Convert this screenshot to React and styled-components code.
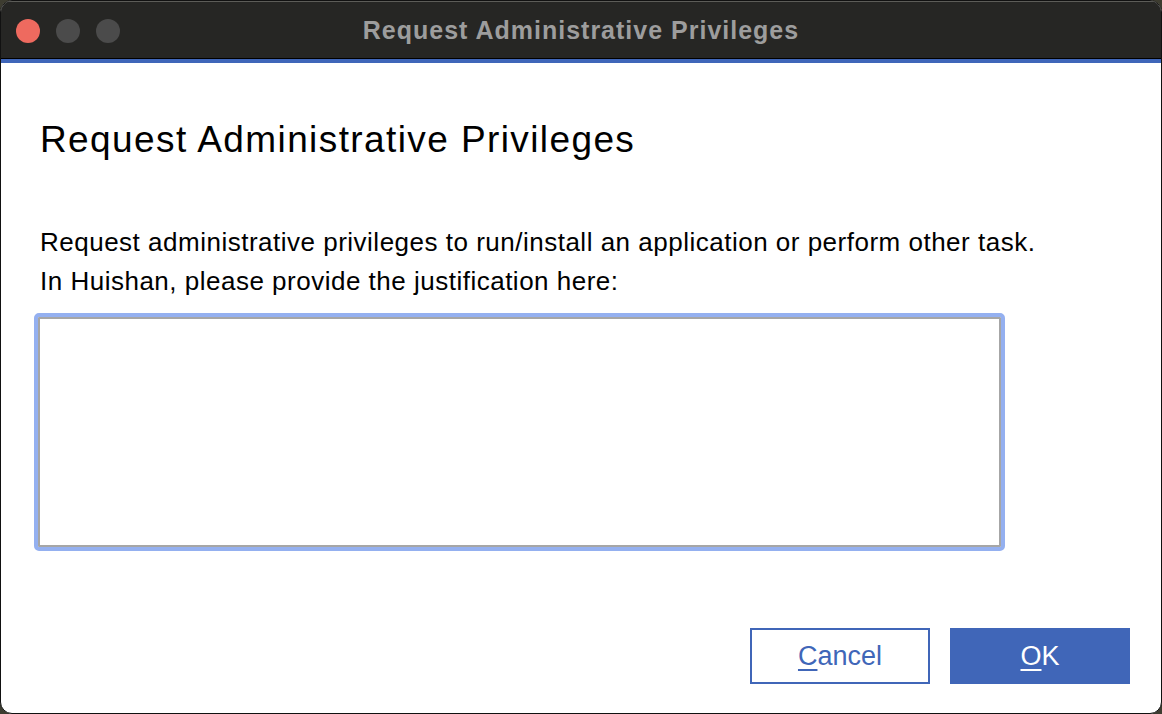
import React from 'react';
import styled, { createGlobalStyle } from 'styled-components';

const GlobalStyle = createGlobalStyle`
	html, body {
		margin: 0;
		padding: 0;
		background: #3d3c30;
	}
	#root {
		width: 1162px;
		height: 714px;
	}
`;

const Window = styled.div`
	width: 1162px;
	height: 714px;
	box-sizing: border-box;
	display: flex;
	flex-direction: column;
	background: #ffffff;
	border: 1px solid #111111;
	border-radius: 12px;
	overflow: hidden;
	font-family: 'Liberation Sans', Arial, sans-serif;
`;

const TitleBar = styled.div`
	position: relative;
	height: 58px;
	flex-shrink: 0;
	display: flex;
	align-items: center;
	justify-content: center;
	background: #262624;
	border-top: 1px solid #5c5c58;
	border-bottom: 1px solid #000000;
	box-sizing: border-box;
`;

const Lights = styled.div`
	position: absolute;
	left: 15px;
	top: 17px;
	display: flex;
	gap: 16px;
`;

const Light = styled.span`
	width: 24px;
	height: 24px;
	border-radius: 50%;
	background: ${({ color }) => color};
`;

const WindowTitle = styled.div`
	font-size: 25px;
	font-weight: 700;
	letter-spacing: 1px;
	color: #9d9d9d;
`;

const AccentLine = styled.div`
	height: 4px;
	flex-shrink: 0;
	background: #3f66b9;
`;

const Content = styled.div`
	flex: 1;
	display: flex;
	flex-direction: column;
	padding: 0 39px;
`;

const Heading = styled.h1`
	margin: 57px 0 0;
	font-size: 37px;
	line-height: 40px;
	font-weight: 400;
	color: #000000;
	letter-spacing: 1.4px;
`;

const Description = styled.p`
	margin: 63px 0 0;
	font-size: 26px;
	line-height: 39px;
	letter-spacing: 0.5px;
	color: #000000;
`;

const FieldRing = styled.div`
	margin: 12px 0 0 -6px;
	width: 971px;
	height: 238px;
	box-sizing: border-box;
	border: 4px solid #94b0f0;
	border-radius: 5px;
	display: flex;
`;

const Field = styled.textarea`
	flex: 1;
	margin: 0;
	resize: none;
	outline: none;
	border: 2px solid #a6a6a6;
	border-radius: 1px;
	background: #ffffff;
	font-family: inherit;
	font-size: 20px;
`;

const Actions = styled.div`
	margin-top: 77px;
	margin-right: -8px;
	display: flex;
	justify-content: flex-end;
	gap: 20px;
`;

const Button = styled.button`
	width: 180px;
	height: 56px;
	box-sizing: border-box;
	border: 2px solid #4066b8;
	border-radius: 0;
	background: ${({ primary }) => (primary ? '#4066b8' : '#ffffff')};
	color: ${({ primary }) => (primary ? '#ffffff' : '#4066b8')};
	font-family: inherit;
	font-size: 27px;
	padding: 0;
	cursor: pointer;

	u {
		text-decoration-thickness: 2px;
		text-underline-offset: 4px;
	}
`;

export default function App() {
	return (
		<>
			<GlobalStyle />
			<Window>
				<TitleBar>
					<Lights>
						<Light color="#ee6a5f" />
						<Light color="#4b4b4b" />
						<Light color="#4b4b4b" />
					</Lights>
					<WindowTitle>Request Administrative Privileges</WindowTitle>
				</TitleBar>
				<AccentLine />
				<Content>
					<Heading>Request Administrative Privileges</Heading>
					<Description>
						Request administrative privileges to run/install an application or perform other task.
						<br />
						In Huishan, please provide the justification here:
					</Description>
					<FieldRing>
						<Field />
					</FieldRing>
					<Actions>
						<Button>
							<u>C</u>ancel
						</Button>
						<Button primary>
							<u>O</u>K
						</Button>
					</Actions>
				</Content>
			</Window>
		</>
	);
}
